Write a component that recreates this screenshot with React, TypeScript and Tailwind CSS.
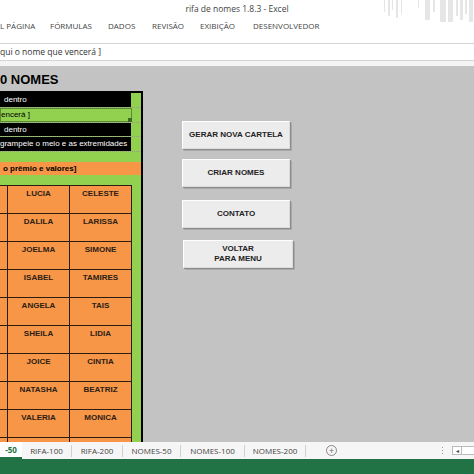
import React from "react";

const names: [string, string][] = [
  ["LUCIA", "CELESTE"],
  ["DALILA", "LARISSA"],
  ["JOELMA", "SIMONE"],
  ["ISABEL", "TAMIRES"],
  ["ANGELA", "TAIS"],
  ["SHEILA", "LIDIA"],
  ["JOICE", "CINTIA"],
  ["NATASHA", "BEATRIZ"],
  ["VALERIA", "MONICA"],
  ["AMANDA", "MIRIAN"],
];

const ribbon = [
  { label: "L PÁGINA", w: "w-[50px]" },
  { label: "FÓRMULAS", w: "w-[58px]" },
  { label: "DADOS", w: "w-[44px]" },
  { label: "REVISÃO", w: "w-[48px]" },
  { label: "EXIBIÇÃO", w: "w-[53px]" },
  { label: "DESENVOLVEDOR", w: "w-[80px]" },
];

const sheets = [
  { label: "RIFA-100", w: "w-[49px]" },
  { label: "RIFA-200", w: "w-[50px]" },
  { label: "NOMES-50", w: "w-[57px]" },
  { label: "NOMES-100", w: "w-[63px]" },
  { label: "NOMES-200", w: "w-[60px]" },
];

const buttons = [
  { label: "GERAR NOVA CARTELA", cls: "mt-[55px] w-[108px]" },
  { label: "CRIAR NOMES", cls: "mt-[10px] w-[108px]" },
  { label: "CONTATO", cls: "mt-[13px] w-[108px]" },
  { label: "VOLTAR\nPARA MENU", cls: "mt-[12px] ml-[1px] w-[110px]" },
];

function TitleDecor() {
  const bars = [
    [384, 1, 12], [388, 2, 16], [392, 1, 10], [396, 2, 18], [401, 1, 14],
    [418, 1, 8], [425, 5, 20], [433, 2, 12], [440, 6, 22], [448, 5, 22],
    [456, 2, 16], [460, 3, 20], [465, 2, 14], [469, 4, 22],
  ];
  return (
    <svg className="absolute right-0 top-0" width="94" height="24" viewBox="380 0 94 24">
      {bars.map(([x, w, h], i) => (
        <rect key={i} x={x} y={0} width={w} height={h} fill="#e6e6e6" />
      ))}
    </svg>
  );
}

export default function App() {
  return (
    <div className="flex h-[474px] w-[474px] flex-col overflow-hidden bg-white font-['Open_Sans',sans-serif]">
      {/* title + ribbon */}
      <div className="relative h-[44px] shrink-0 border-b border-[#d4d4d4] bg-white">
        <TitleDecor />
        <div className="flex h-[18px] items-center justify-center text-[8.5px] text-[#444]">
          rifa de nomes 1.8.3 - Excel
        </div>
        <div className="flex h-[15px] items-center text-[8px] text-[#444]">
          {ribbon.map((r) => (
            <div key={r.label} className={`${r.w} shrink-0 whitespace-nowrap`}>
              {r.label}
            </div>
          ))}
        </div>
      </div>

      {/* formula bar */}
      <div className="flex h-[17px] shrink-0 items-center border-b border-[#d4d4d4] bg-white text-[8.5px] text-[#333]">
        qui o nome que vencerá ]
      </div>
      <div className="h-[5px] shrink-0 bg-[#f4f4f4]" />

      {/* sheet */}
      <div className="flex h-[376px] shrink-0 overflow-hidden bg-[#c3c3c3] font-['Liberation_Sans',Arial,sans-serif]">
        <div className="w-[143px] shrink-0">
          <div className="pt-[6px]">
            <div className="h-[19px] text-[13px] font-bold leading-[15px] text-black">0 NOMES</div>
          </div>
          <div className="border-r-2 border-t-2 border-black bg-[#92d050]">
            <div className="flex h-[15px] border-b border-dotted border-[#9a9a9a]">
              <div className="flex w-[131px] items-center bg-black pl-[4px] text-[8px] text-white">dentro</div>
              <div className="flex-1" />
            </div>
            <div className="flex h-[15px] border-b border-dotted border-[#9a9a9a]">
              <div className="relative flex w-[132px] items-center border border-[#5b8c34] bg-[#92d050] text-[8px] text-black">
                <span className="whitespace-nowrap">encerá ]</span>
                <div className="absolute bottom-[-1px] right-[-1px] h-[4px] w-[4px] bg-[#3d6a22]" />
              </div>
              <div className="flex-1" />
            </div>
            <div className="flex h-[14px] border-b border-dotted border-[#9a9a9a]">
              <div className="flex w-[131px] items-center bg-black pl-[4px] text-[8px] text-white">dentro</div>
              <div className="flex-1" />
            </div>
            <div className="flex h-[15px] border-b border-dotted border-[#9a9a9a]">
              <div className="flex w-[131px] items-center whitespace-nowrap bg-black text-[8px] text-white">
                grampeie o meio e as extremidades
              </div>
              <div className="flex-1" />
            </div>
            <div className="h-[10px]" />
            <div className="flex h-[13px] items-center bg-[#f79646] pl-[3px] text-[8px] font-bold text-black">
              o prêmio e valores]
            </div>
            <div className="h-[10px]" />
            <div className="flex">
              <div className="w-[132px] border-t border-[#2b1d12] bg-[#f79646]">
                {names.map(([a, b]) => (
                  <div key={a} className="flex h-[28px] border-b border-[#2b1d12]">
                    <div className="w-[8px] border-r border-[#2b1d12]" />
                    <div className="w-[62px] border-r border-[#2b1d12] pt-[2px] text-center text-[8px] font-bold text-[#2a2018]">
                      {a}
                    </div>
                    <div className="w-[62px] border-r border-[#2b1d12] pt-[2px] text-center text-[8px] font-bold text-[#2a2018]">
                      {b}
                    </div>
                  </div>
                ))}
              </div>
              <div className="flex-1" />
            </div>
          </div>
        </div>

        <div className="ml-[39px] flex flex-col">
          {buttons.map((b) => (
            <button
              key={b.label}
              className={`${b.cls} flex h-[28px] items-center justify-center whitespace-pre-line border border-[#dcdcdc] border-t-white border-l-white bg-[#ececec] text-center text-[8px] font-bold leading-[10px] text-[#222] shadow-[1px_1px_0_#8c8c8c,2px_2px_0_#a9a9a9]`}
            >
              {b.label}
            </button>
          ))}
        </div>
      </div>

      {/* sheet tabs */}
      <div className="flex h-[17px] shrink-0 items-center bg-[#f6f6f6] text-[8px] leading-[10px] text-[#444]">
        <div className="flex h-full w-[22px] items-center justify-center border-b-2 border-[#217346] bg-white font-bold text-[#217346]">
          -50
        </div>
        {sheets.map((s) => (
          <React.Fragment key={s.label}>
            <div className={`${s.w} flex h-full items-center justify-center whitespace-nowrap`}>{s.label}</div>
            <div className="h-[12px] w-px bg-[#d0d0d0]" />
          </React.Fragment>
        ))}
        <div className="ml-[20px] flex h-[11px] w-[11px] items-center justify-center rounded-full border border-[#888] text-[9px] leading-none text-[#666]">
          +
        </div>
        <div className="ml-auto mr-[9px] flex flex-col gap-[2px]">
          <div className="h-[1px] w-[1px] bg-[#999]" />
          <div className="h-[1px] w-[1px] bg-[#999]" />
          <div className="h-[1px] w-[1px] bg-[#999]" />
        </div>
        <div className="flex h-[9px] w-[10px] items-center justify-center border border-[#bbb] bg-white text-[6px] leading-none text-[#444]">◂</div>
        <div className="h-[9px] w-[12px] border-y border-[#bbb] bg-white" />
      </div>

      {/* status bar */}
      <div className="h-[15px] shrink-0 bg-[#217346]" />
    </div>
  );
}
